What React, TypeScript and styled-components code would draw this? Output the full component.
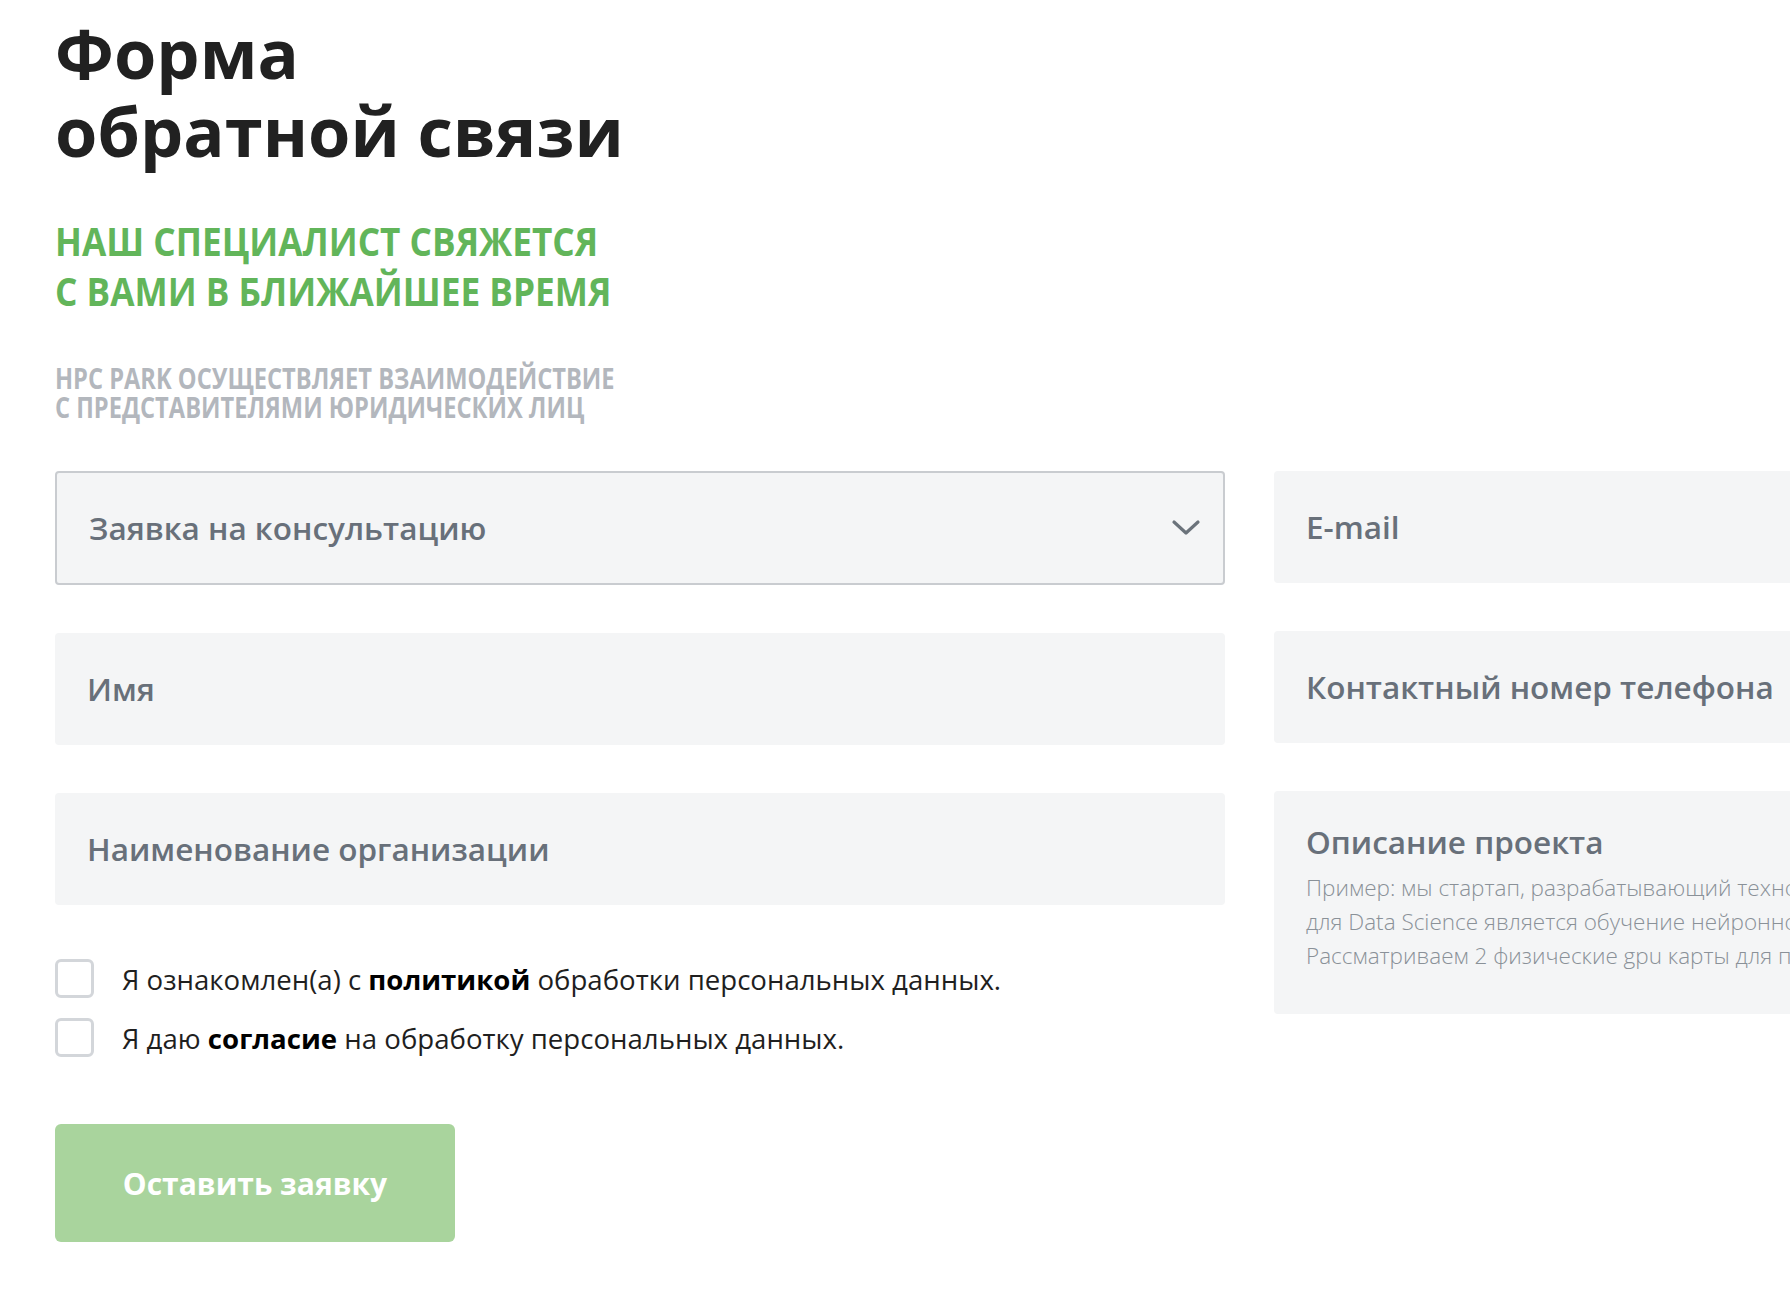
import React from "react";
import styled, { createGlobalStyle } from "styled-components";

const Global = createGlobalStyle`
  html, body { margin: 0; padding: 0; background: #ffffff; overflow: hidden; }
  body { font-family: "Open Sans", "Noto Sans", sans-serif; color: #212121; }
  * { box-sizing: border-box; }
`;

const Page = styled.div`
  width: 2500px;
  padding: 14px 0 0 55px;
`;

const Title = styled.h1`
  margin: 0;
  font-family: "Open Sans", sans-serif;
  font-weight: 700;
  font-size: 68.5px;
  line-height: 78px;
  color: #212121;
`;

const Accent = styled.h2`
  margin: 46px 0 0;
  font-family: "Open Sans", sans-serif;
  font-weight: 700;
  font-size: 40px;
  line-height: 50px;
  text-transform: uppercase;
  color: #62b55a;
  transform: scaleX(0.88);
  transform-origin: left top;
`;

const Note = styled.p`
  margin: 48px 0 0;
  font-family: "Open Sans", sans-serif;
  font-weight: 700;
  font-size: 28px;
  line-height: 29px;
  text-transform: uppercase;
  color: #b3b7bd;
  transform: scaleX(0.845);
  transform-origin: left top;
`;

const FormGrid = styled.div`
  margin-top: 49px;
  display: grid;
  grid-template-columns: 1170px 1170px;
  column-gap: 49px;
  align-items: start;
`;

const Column = styled.div`
  display: flex;
  flex-direction: column;
  gap: 48px;
`;

const Field = styled.div<{ $tall?: boolean; $bordered?: boolean }>`
  position: relative;
  height: ${(p) => (p.$tall ? "223px" : p.$bordered ? "114px" : "112px")};
  background: #f4f5f6;
  border-radius: 4px;
  border: ${(p) => (p.$bordered ? "2px solid #c9ccd0" : "none")};
  padding: ${(p) => (p.$tall ? "31px 32px 0" : "0 32px")};
  display: flex;
  flex-direction: column;
  justify-content: ${(p) => (p.$tall ? "flex-start" : "center")};
  overflow: hidden;
`;

const Placeholder = styled.span`
  font-family: "Open Sans", sans-serif;
  font-weight: 600;
  font-size: 31.5px;
  line-height: 40px;
  color: #68707a;
  white-space: nowrap;
`;

const Hint = styled.p`
  margin: 9px 0 0;
  font-family: "Open Sans", sans-serif;
  font-weight: 300;
  font-size: 22.5px;
  line-height: 34px;
  color: #8a9198;
  white-space: nowrap;
`;

const Chevron = styled.svg`
  position: absolute;
  right: 22px;
  top: 50%;
  margin-top: -9px;
  width: 30px;
  height: 18px;
`;

const Checks = styled.div`
  margin-top: 54px;
  display: flex;
  flex-direction: column;
  gap: 20px;
`;

const CheckRow = styled.label`
  display: flex;
  align-items: center;
  gap: 28px;
  font-family: "Open Sans", sans-serif;
  font-size: 27.6px;
  line-height: 38px;
  color: #1f1f1f;
  b { font-weight: 700; color: #000; }
`;

const Box = styled.span`
  width: 39px;
  height: 39px;
  border: 3px solid #d3d6da;
  border-radius: 6px;
  background: #fff;
  flex: none;
`;

const Submit = styled.button`
  margin-top: 67px;
  width: 400px;
  height: 118px;
  border: none;
  border-radius: 6px;
  background: #a9d49d;
  color: #ffffff;
  font-family: "Open Sans", sans-serif;
  font-weight: 700;
  font-size: 30px;
  padding: 0;
  cursor: pointer;
`;

export default function App() {
  return (
    <>
      <Global />
      <Page>
        <Title>
          Форма
          <br />
          обратной связи
        </Title>
        <Accent>
          Наш специалист свяжется
          <br />с вами в ближайшее время
        </Accent>
        <Note>
          HPC PARK осуществляет взаимодействие
          <br />с представителями юридических лиц
        </Note>
        <FormGrid>
          <div>
            <Column>
              <Field $bordered>
                <Placeholder>Заявка на консультацию</Placeholder>
                <Chevron viewBox="0 0 30 18" fill="none">
                  <path d="M3 3 L15 14 L27 3" stroke="#6b737b" strokeWidth="3.2" strokeLinecap="round" strokeLinejoin="round" />
                </Chevron>
              </Field>
              <Field>
                <Placeholder>Имя</Placeholder>
              </Field>
              <Field>
                <Placeholder>Наименование организации</Placeholder>
              </Field>
            </Column>
            <Checks>
              <CheckRow>
                <Box />
                <span>
                  Я ознакомлен(а) с <b>политикой</b> обработки персональных данных.
                </span>
              </CheckRow>
              <CheckRow>
                <Box />
                <span>
                  Я даю <b>согласие</b> на обработку персональных данных.
                </span>
              </CheckRow>
            </Checks>
            <Submit>Оставить заявку</Submit>
          </div>
          <Column>
            <Field>
              <Placeholder>E-mail</Placeholder>
            </Field>
            <Field>
              <Placeholder>Контактный номер телефона</Placeholder>
            </Field>
            <Field $tall>
              <Placeholder>Описание проекта</Placeholder>
              <Hint>
                Пример: мы стартап, разрабатывающий технологии компьютерного зрения. Основной задачей
                <br />
                для Data Science является обучение нейронной сети на больших объёмах данных.
                <br />
                Рассматриваем 2 физические gpu карты для проекта.
              </Hint>
            </Field>
          </Column>
        </FormGrid>
      </Page>
    </>
  );
}
